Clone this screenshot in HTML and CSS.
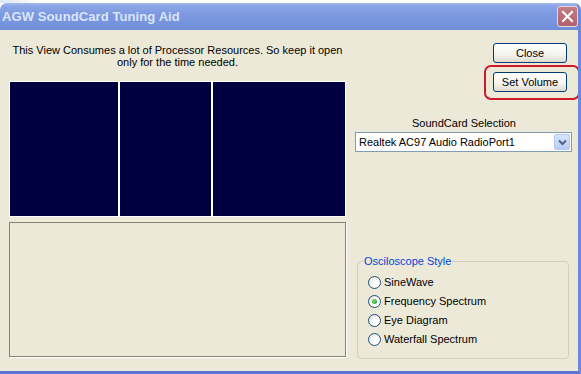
FILE: index.html
```html
<!DOCTYPE html>
<html lang="en">
<head>
    <meta charset="UTF-8">
    <title>AGW SoundCard Tuning Aid</title>
    <link rel="stylesheet" href="styles.css">
</head>
<body>
    <div class="desktop-strip"></div>

    <div class="window">
        <div class="titlebar">
            <span class="title">AGW SoundCard Tuning Aid</span>
            <span class="close-x">
                <svg width="13" height="13" viewBox="0 0 13 13">
                    <path d="M2 2 L11 11 M11 2 L2 11" stroke="#fff" stroke-width="2" stroke-linecap="square"/>
                </svg>
            </span>
        </div>

        <div class="client">
            <div class="left-col">
                <p class="notice">This View Consumes a lot of Processor Resources. So keep it open<br>only for the time needed.</p>
                <div class="scope">
                    <div class="scope-pane pane-a"></div>
                    <div class="scope-pane pane-b"></div>
                    <div class="scope-pane pane-c"></div>
                </div>
                <div class="waterfall"></div>
            </div>

            <div class="right-col">
                <div class="buttons">
                    <button class="xp-btn">Close</button>
                    <button class="xp-btn">Set Volume</button>
                    <span class="highlight"></span>
                </div>

                <div class="card-label">SoundCard Selection</div>
                <div class="combo">
                    <span class="combo-text">Realtek AC97 Audio RadioPort1</span>
                    <span class="combo-arrow">
                        <svg width="9" height="7" viewBox="0 0 9 7">
                            <path d="M1 1.5 L4.5 5 L8 1.5" fill="none" stroke="#4d6185" stroke-width="2"/>
                        </svg>
                    </span>
                </div>

                <fieldset class="group">
                    <legend>Osciloscope Style</legend>
                    <label class="radio"><span class="dot"></span>SineWave</label>
                    <label class="radio"><span class="dot checked"></span>Frequency Spectrum</label>
                    <label class="radio"><span class="dot"></span>Eye Diagram</label>
                    <label class="radio"><span class="dot"></span>Waterfall Spectrum</label>
                </fieldset>
            </div>
        </div>
    </div>
</body>
</html>
```

FILE: styles.css
```css
* {
    margin: 0;
    padding: 0;
    box-sizing: border-box;
    font-family: "Liberation Sans", Arial, sans-serif;
}

body {
    width: 581px;
    height: 374px;
    overflow: hidden;
    background: #fff;
    color: #000;
    font-size: 11px;
}

.desktop-strip {
    height: 3px;
    background: linear-gradient(90deg, #dfe6f3 0, #fff 40px, #fff 100%);
}

.window {
    height: 371px;
    display: flex;
    flex-direction: column;
    background: #ece9d8;
    border-right: 3px solid #6d88d8;
    border-bottom: 3px solid #5a76d2;
    border-radius: 7px 7px 0 0;
    overflow: hidden;
}

.titlebar {
    height: 27px;
    flex: none;
    display: flex;
    align-items: center;
    justify-content: space-between;
    padding: 0 0 0 2px;
    background: linear-gradient(#a4bbef 0, #8aa5e6 3px, #7c98df 12px, #7593dd 22px, #6f8cd8 27px);
}

.title {
    color: #dbe5f9;
    font-weight: bold;
    font-size: 13px;
    letter-spacing: 0.1px;
}

.close-x {
    width: 21px;
    height: 21px;
    display: flex;
    align-items: center;
    justify-content: center;
    background: linear-gradient(#c47d86, #b0606a);
    border: 1px solid #e6d6dc;
    border-radius: 3px;
}

.client {
    flex: 1;
    display: flex;
}

.left-col {
    width: 346px;
    padding-left: 9px;
    display: flex;
    flex-direction: column;
}

.notice {
    margin-top: 14px;
    text-align: center;
    line-height: 12px;
    height: 24px;
}

.scope {
    margin-top: 13px;
    height: 136px;
    display: flex;
    gap: 2px;
    background: #fff;
    border: 1px solid #fff;
}

.scope-pane {
    background: #000040;
}

.pane-a {
    width: 108px;
}

.pane-b {
    width: 91px;
}

.pane-c {
    flex: 1;
}

.waterfall {
    margin-top: 5px;
    height: 135px;
    border: 1px solid #858473;
    box-shadow: 1px 1px 0 #fff;
}

.right-col {
    flex: 1;
    display: flex;
    flex-direction: column;
}

.buttons {
    position: relative;
    margin-top: 13px;
    align-self: flex-end;
    margin-right: 11px;
    display: flex;
    flex-direction: column;
    gap: 9px;
}

.xp-btn {
    width: 74px;
    height: 20px;
    font-size: 11px;
    color: #000;
    background: linear-gradient(#ffffff, #f4f3ee 60%, #dedbcc);
    border: 1px solid #003c74;
    border-radius: 3px;
}

.highlight {
    position: absolute;
    left: -9px;
    top: 22px;
    width: 96px;
    height: 35px;
    border: 2px solid #d01828;
    border-radius: 7px;
}

.card-label {
    margin-top: 25px;
    text-align: center;
    line-height: 12px;
    padding-left: 4px;
}

.combo {
    margin: 3px 6px 0 9px;
    height: 20px;
    display: flex;
    align-items: center;
    background: #fff;
    border: 1px solid #7f9db9;
}

.combo-text {
    flex: 1;
    padding-left: 3px;
    font-size: 11px;
}

.combo-arrow {
    width: 16px;
    height: 16px;
    margin-right: 1px;
    display: flex;
    align-items: center;
    justify-content: center;
    background: linear-gradient(#d9e5fd, #b9cdf8);
    border: 1px solid #b4c8f4;
    border-radius: 2px;
}

.group {
    margin: auto 9px 12px 11px;
    height: 104px;
    border: 1px solid #d0d0bf;
    border-radius: 4px;
    padding: 9px 0 0 10px;
    display: flex;
    flex-direction: column;
    gap: 6px;
}

.group legend {
    color: #0046d5;
    padding: 0 1px;
    margin-left: -5px;
    line-height: 12px;
}

.radio {
    display: flex;
    align-items: center;
    gap: 3px;
    height: 13px;
    line-height: 13px;
}

.dot {
    width: 13px;
    height: 13px;
    border-radius: 50%;
    border: 1px solid #1c5180;
    background: radial-gradient(circle at 65% 65%, #ffffff 30%, #dcdcd3 100%);
    display: flex;
    align-items: center;
    justify-content: center;
}

.dot.checked::after {
    content: "";
    width: 5px;
    height: 5px;
    border-radius: 50%;
    background: radial-gradient(circle at 40% 40%, #6fd46f, #21a121);
}
```
